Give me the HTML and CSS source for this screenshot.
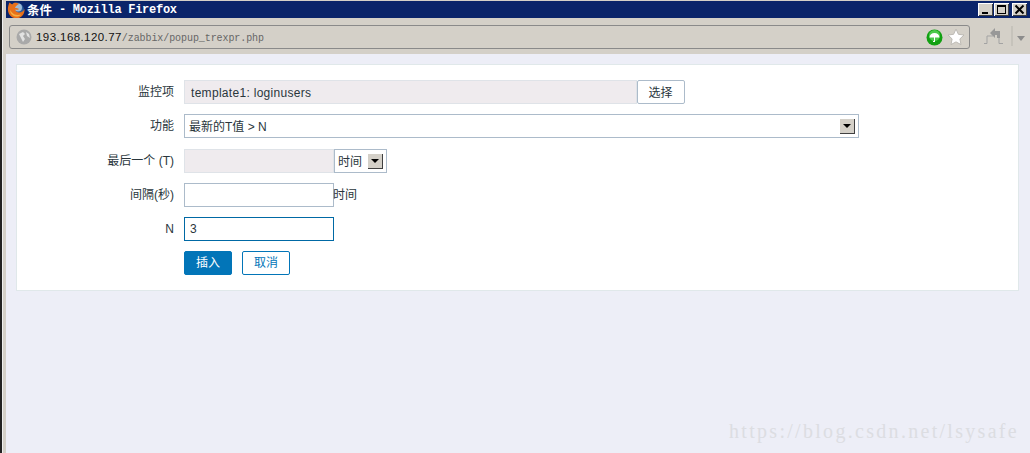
FILE: index.html
```html
<!DOCTYPE html>
<html lang="zh">
<head>
<meta charset="utf-8">
<title>条件</title>
<link rel="stylesheet" href="styles.css">
</head>
<body>
<div class="window">
  <header class="titlebar">
    <div class="title">
      <svg class="fx" width="18" height="18" viewBox="0 0 18 18"><circle cx="9.500" cy="9" r="7.500" fill="#2f5f9c"/><circle cx="11" cy="6.500" r="4" fill="#9dbcd9"/><path d="M2.500 1.500C1 5 0 9 2 13c2 4 7 5.500 11 3.500 3-1.500 5-5 4.500-8.500-1 2.500-3.500 4-6 3.500-2.500-.5-3.500-2-3-3 1 .5 2.500 .5 3.500-.5-1-1-2.500-1-4-1 .5-2 2-3 4-4C9 1 6.500 1.500 5.500 3.500 4.500 3 3.500 2.500 2.500 1.500z" fill="#e8701a"/><path d="M3 9c0 3 2 6 6 6.500 2 .2 4-.5 5-2-3 1-7 .5-8.500-1.500C4 10.500 3.500 9.500 3 9z" fill="#f6b042"/></svg>
      <span class="title-cjk">条件</span><span class="title-text"> - Mozilla Firefox</span>
    </div>
    <div class="winbtns">
      <span class="winbtn"><svg width="15" height="13" viewBox="0 0 15 13"><rect x="4" y="9" width="6" height="2" fill="#000"/></svg></span>
      <span class="winbtn"><svg width="15" height="13" viewBox="0 0 15 13"><rect x="3.500" y="2.500" width="8" height="8" fill="none" stroke="#000"/><rect x="3" y="2" width="9" height="2" fill="#000"/></svg></span>
      <span class="winbtn winbtn-close"><svg width="15" height="13" viewBox="0 0 15 13"><path d="M3.500 2.500l8 8M11.500 2.500l-8 8" stroke="#000" stroke-width="2"/></svg></span>
    </div>
  </header>
  <div class="toolbar">
    <div class="urlbar">
      <svg class="globe" width="16" height="16" viewBox="0 0 16 16"><circle cx="8" cy="8" r="7.500" fill="#a9a9a9"/><path d="M3 5l4-2 2 2-2 2 2 3-2 3-2-4zM10 3l3 2 1 4-3-2z" fill="#e2e2e2"/></svg>
      <span class="url"><span class="url-host">193.168.120.77</span>/zabbix/popup_trexpr.php</span>
      <svg class="go" width="17" height="17" viewBox="0 0 17 17"><circle cx="8.500" cy="8.500" r="8" fill="#12a012"/><circle cx="8.500" cy="6.500" r="5.500" fill="#4cc94c"/><path d="M3.500 8.500a5 4.500 0 0 1 10 0zM8 8.500h1V13H7v-1h1z" fill="#fff"/></svg>
      <svg class="star" width="18" height="18" viewBox="0 0 18 18"><path d="M9 1l2.400 5.300 5.600.7-4.100 3.900 1.100 5.700L9 13.900l-5 2.700 1.100-5.700L1 7l5.600-.7z" fill="#fff" stroke="#bdbab4"/></svg>
    </div>
    <svg class="share" width="22" height="18" viewBox="0 0 22 18"><path d="M1 16.500h3V9h6M15 9h1v7.500h4" fill="none" stroke="#a3a3a3"/><path d="M7 6l5-5v3h5v7h-3V8h-2v3z" fill="#989898"/></svg>
    <span class="sep"></span>
    <span class="menu-arrow"></span>
  </div>
  <main class="content">
    <form class="panel">
      <div class="row">
        <label class="lbl">监控项</label>
        <div class="field">
          <input class="inp inp-item" type="text" value="template1: loginusers" readonly>
          <button class="btn-select" type="button">选择</button>
        </div>
      </div>
      <div class="row">
        <label class="lbl">功能</label>
        <div class="field">
          <div class="sel sel-func"><span class="sel-text sel-text-wide">最新的T值 &gt; N</span><span class="arrowbtn"></span></div>
        </div>
      </div>
      <div class="row row-shift">
        <label class="lbl">最后一个 (T)</label>
        <div class="field">
          <input class="inp inp-short inp-off" type="text" readonly>
          <div class="sel sel-time"><span class="sel-text">时间</span><span class="arrowbtn"></span></div>
        </div>
      </div>
      <div class="row">
        <label class="lbl">间隔(秒)</label>
        <div class="field">
          <input class="inp inp-short" type="text">
          <span class="unit">时间</span>
        </div>
      </div>
      <div class="row">
        <label class="lbl">N</label>
        <div class="field">
          <input class="inp inp-short inp-focus" type="text" value="3">
        </div>
      </div>
      <div class="row">
        <span class="lbl"></span>
        <div class="field">
          <button class="btn btn-primary" type="button">插入</button>
          <button class="btn btn-alt" type="button">取消</button>
        </div>
      </div>
    </form>
    <div class="watermark">https://blog.csdn.net/lsysafe</div>
  </main>
</div>
</body>
</html>
```

FILE: styles.css
```css
* { box-sizing: border-box; }
html, body { margin: 0; padding: 0; height: 100%; overflow: hidden; }
body { font-family: "Liberation Sans", "Noto Sans CJK SC", sans-serif; font-size: 12px; color: #2a363c; }
.window { width: 1030px; height: 453px; display: flex; flex-direction: column; padding-left: 6px; background: linear-gradient(to right, #222 0, #222 2px, #efefef 2px, #efefef 3px, #d4d0c8 3px); }
.titlebar { height: 17px; margin-top: 1px; background: #0a246a; display: flex; justify-content: space-between; align-items: center; padding: 0 3px 0 1px; flex: none; }
.title { display: flex; align-items: center; color: #fff; font-weight: bold; font-family: "Liberation Mono", monospace; font-size: 12px; letter-spacing: -0.270px; white-space: pre; }
.fx { margin-right: 2px; }
.title-cjk { font-family: "Noto Sans CJK SC", sans-serif; font-size: 12.500px; letter-spacing: 0; }
.winbtns { display: flex; gap: 1px; }
.winbtn { width: 15px; height: 13px; background: #d4d0c8; box-shadow: inset 1px 1px 0 #fff, inset -1px -1px 0 #404040; display: block; line-height: 0; }
.winbtn-close { margin-left: 2px; }
.toolbar { height: 36px; flex: none; display: flex; align-items: flex-start; padding: 7px 0 0 3px; background: #d4d0c8; }
.urlbar { width: 961px; height: 24px; border: 1px solid #8a8a8a; border-radius: 3px; display: flex; align-items: center; padding: 0 4px 0 6px; }
.globe { flex: none; }
.url { margin-left: 4px; flex: 1; font-family: "Liberation Mono", monospace; font-size: 10px; letter-spacing: -0.080px; color: #666; white-space: nowrap; }
.url-host { color: #111; font-family: "Liberation Sans", sans-serif; font-size: 11.500px; letter-spacing: 0.420px; }
.go { flex: none; margin-right: 4px; }
.star { flex: none; }
.share { margin: 2px 0 0 13px; flex: none; }
.sep { width: 2px; height: 20px; margin: 1px 0 0 6px; background: #c6c3bb; flex: none; }
.menu-arrow { width: 0; height: 0; margin: 11px 0 0 4px; border: 4px solid transparent; border-top: 5px solid #8c8c8c; flex: none; }
.content { flex: 1; position: relative; background: #edeef7; padding: 10px 11px 0 10px; }
.panel { height: 227px; background: #fff; border: 1px solid #e0e8ea; padding: 15px 0 0 0; display: flex; flex-direction: column; gap: 10px; }
.row { display: flex; align-items: center; height: 24px; flex: none; }
.row-shift { margin-top: 1px; }
.lbl { width: 157px; flex: none; text-align: right; line-height: 24px; }
.field { margin-left: 10px; display: flex; align-items: center; }
.inp { height: 24px; border: 1px solid #acbbca; background: #fff; padding: 0 5px; font: inherit; color: inherit; outline: none; border-radius: 0; }
.inp-item { width: 453px; background: #efebee; border-color: #dfe3e8; padding: 2px 5px 0 6px; letter-spacing: 0.300px; }
.inp-short { width: 150px; }
.inp-off { background: #efebee; border-color: #dfe3e8; }
.inp-focus { border-color: #0069a5; }
.btn-select { width: 48px; height: 24px; margin: 0; padding: 0 1px 2px 0; background: #fff; border: 1px solid #acbbca; border-radius: 2px; font: inherit; color: inherit; }
.sel { height: 24px; border: 1px solid #acbbca; background: #fff; display: flex; align-items: center; justify-content: space-between; padding-right: 3px; }
.sel-text { padding-left: 3px; padding-bottom: 2px; }
.sel-text-wide { padding-left: 4px; }
.sel-func { width: 675px; }
.sel-time { width: 53px; }
.arrowbtn { width: 16px; height: 16px; background: #d4d0c8; box-shadow: inset 1px 1px 0 #fff, inset -1px -1px 0 #404040; position: relative; display: block; }
.arrowbtn::after { content: ""; position: absolute; left: 4px; top: 6px; border: 4px solid transparent; border-top: 4px solid #000; border-bottom: 0; }
.unit { line-height: 24px; margin-left: -1px; }
.btn { width: 48px; height: 24px; padding: 0 0 3px; font: inherit; border-radius: 2px; border: 1px solid #0275b8; }
.btn-primary { background: #0275b8; color: #fff; }
.btn-alt { background: #fff; color: #0275b8; margin-left: 10px; }
.watermark { position: absolute; left: 723px; top: 366px; font-family: "Liberation Serif", "DejaVu Serif", serif; font-size: 20px; color: #dcdde2; letter-spacing: 2.300px; white-space: nowrap; }
```
